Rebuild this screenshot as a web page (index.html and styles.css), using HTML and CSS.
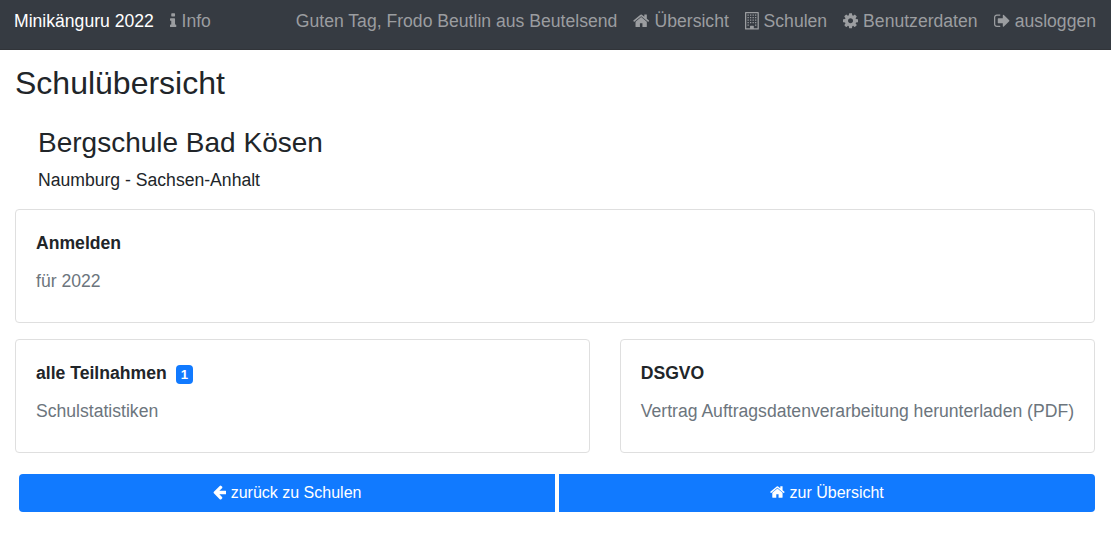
FILE: index.html
```
<!DOCTYPE html>
<html lang="de">
<head>
<meta charset="utf-8">
<title>Minikänguru 2022</title>
<link rel="stylesheet" href="styles.css">
</head>
<body>
<svg class="sprite" aria-hidden="true">
  <symbol id="home" viewBox="64 0 1664 1792"><path d="M1472 992v480q0 26-19 45t-45 19h-384v-384h-256v384h-384q-26 0-45-19t-19-45v-480q0-1 .5-3t.5-3l575-474 575 474q1 2 1 6zm223-69l-62 74q-8 9-21 11h-3q-13 0-21-7l-692-577-692 577q-12 8-24 7-13-2-21-11l-62-74q-8-10-7-23.5t11-21.5l719-599q32-26 76-26t76 26l244 204v-195q0-14 9-23t23-9h192q14 0 23 9t9 23v408l219 182q10 8 11 21.5t-7 23.5z"/></symbol>
</svg>
<nav class="navbar">
  <div class="nav-group">
    <a class="nav-link brand">Minikänguru 2022</a>
    <a class="nav-link"><svg class="icon icon-info" viewBox="576 0 640 1792"><path d="M1216 1344v128q0 26-19 45t-45 19h-512q-26 0-45-19t-19-45v-128q0-26 19-45t45-19h64v-384h-64q-26 0-45-19t-19-45v-128q0-26 19-45t45-19h384q26 0 45 19t19 45v576h64q26 0 45 19t19 45zm-128-1152v192q0 26-19 45t-45 19h-256q-26 0-45-19t-19-45v-192q0-26 19-45t45-19h256q26 0 45 19t19 45z"/></svg> Info</a>
  </div>
  <div class="nav-group">
    <span class="nav-link">Guten Tag, Frodo Beutlin aus Beutelsend</span>
    <a class="nav-link"><svg class="icon icon-wide"><use href="#home"/></svg> Übersicht</a>
    <a class="nav-link"><svg class="icon icon-building" viewBox="0 0 1408 1792"><path fill-rule="evenodd" d="M64 0H1344Q1408 0 1408 64V1728Q1408 1792 1344 1792H64Q0 1792 0 1728V64Q0 0 64 0ZM128 128V1664H512V1440Q512 1408 544 1408H864Q896 1408 896 1440V1664H1280V128Z"/><path class="windows" d="M288 256V1408M544 256V1280M800 256V1280M1056 256V1408" transform="translate(32 0)"/></svg> Schulen</a>
    <a class="nav-link"><svg class="icon icon-medium" viewBox="128 0 1536 1792"><path d="M1152 896q0-106-75-181t-181-75-181 75-75 181 75 181 181 75 181-75 75-181zm512-109v222q0 12-8 23t-20 13l-185 28q-19 54-39 91 35 50 107 138 10 12 10 25t-9 23q-27 37-99 108t-94 71q-12 0-26-9l-138-108q-44 23-91 38-16 136-29 186-7 28-36 28h-222q-14 0-24.5-8.5t-11.5-21.5l-28-184q-49-16-90-37l-141 107q-10 9-25 9-14 0-25-11-126-114-165-168-7-10-7-23 0-12 8-23 15-21 51-66.5t54-70.5q-27-50-41-99l-183-27q-13-2-21-12.5t-8-23.5v-222q0-12 8-23t19-13l186-28q14-46 39-92-40-57-107-138-10-12-10-24 0-10 9-23 26-36 98.5-107.5t94.5-71.5q13 0 26 10l138 107q44-23 91-38 16-136 29-186 7-28 36-28h222q14 0 24.5 8.5t11.5 21.5l28 184q49 16 90 37l142-107q9-9 24-9 13 0 25 10 129 119 165 170 7 8 7 22 0 12-8 23-15 21-51 66.5t-54 70.5q26 50 41 98l183 28q13 2 21 12.5t8 23.5z"/></svg> Benutzerdaten</a>
    <a class="nav-link"><svg class="icon icon-wide" viewBox="64 0 1664 1792"><path d="M704 1440q0 4 1 20t.5 26.5-3 23.5-10 19.5-20.5 6.5h-320q-119 0-203.5-84.5t-84.5-203.5v-704q0-119 84.5-203.5t203.5-84.5h320q13 0 22.5 9.5t9.5 22.5q0 4 1 20t.5 26.5-3 23.5-10 19.5-20.5 6.5h-320q-66 0-113 47t-47 113v704q0 66 47 113t113 47h312l11.5 1 11.5 3 8 5.5 7 9 2 13.5zm928-544q0 26-19 45l-544 544q-19 19-45 19t-45-19-19-45v-288h-448q-26 0-45-19t-19-45v-384q0-26 19-45t45-19h448v-288q0-26 19-45t45-19 45 19l544 544q19 19 19 45z"/></svg> ausloggen</a>
  </div>
</nav>
<main class="page">
  <h1 class="title">Schulübersicht</h1>
  <header class="school">
    <h2 class="school-name">Bergschule Bad Kösen</h2>
    <p class="school-place">Naumburg - Sachsen-Anhalt</p>
  </header>
  <section class="card">
    <h3 class="card-title">Anmelden</h3>
    <p class="card-text">für 2022</p>
  </section>
  <div class="card-row">
    <section class="card card-grow">
      <h3 class="card-title">alle Teilnahmen <span class="badge">1</span></h3>
      <p class="card-text">Schulstatistiken</p>
    </section>
    <section class="card">
      <h3 class="card-title">DSGVO</h3>
      <p class="card-text">Vertrag Auftragsdatenverarbeitung herunterladen (PDF)</p>
    </section>
  </div>
  <div class="buttons">
    <button class="btn btn-first"><svg class="icon icon-medium" viewBox="128 0 1536 1792"><path d="M1664 896v128q0 53-32.5 90.5t-84.5 37.5h-704l293 294q38 36 38 90t-38 90l-75 76q-37 37-90 37-52 0-91-37l-651-652q-37-37-37-90 0-52 37-91l651-650q38-38 91-38 52 0 90 38l75 74q38 38 38 91t-38 91l-293 293h704q52 0 84.5 37.5t32.5 90.5z"/></svg> zurück zu Schulen</button>
    <button class="btn btn-last"><svg class="icon icon-wide"><use href="#home"/></svg> zur Übersicht</button>
  </div>
</main>
</body>
</html>
```
FILE: styles.css
```
* { box-sizing: border-box; }
body {
  margin: 0;
  background: #fff;
  color: #212529;
  font: 17.6px/26.4px "Liberation Sans", Arial, sans-serif;
}
.sprite { display: none; }
.navbar {
  display: flex;
  justify-content: space-between;
  height: 50px;
  padding: 8px 7px 0 6px;
  background: #363b42;
  border-bottom: 1px solid #313439;
}
.nav-group { display: flex; }
.nav-link { padding: 0 8px; color: #9b9da0; white-space: nowrap; }
.brand { padding-right: 8.5px; color: #fff; }
.icon { height: 1em; vertical-align: -0.143em; fill: currentColor; }
.icon-info { width: 0.357em; }
.icon-wide { width: 0.929em; }
.icon-building { width: 0.786em; }
.icon-medium { width: 0.857em; }
.windows { fill: none; stroke: currentColor; stroke-width: 128; stroke-dasharray: 128; }
.page { padding: 14px 16px 0 15px; }
.title { margin: 0; font-size: 32px; line-height: 38px; font-weight: 400; }
.school { padding: 24px 23px 16px; }
.school-name { margin: 0 0 7px; font-size: 28px; line-height: 33.6px; font-weight: 400; }
.school-place { margin: 0; }
.card {
  height: 114px;
  padding: 20px;
  border: 1px solid #dfdfdf;
  border-radius: 4px;
}
.card-title { margin: 0 0 12px; font-size: 17.6px; line-height: 26px; font-weight: 700; }
.card-text { margin: 0; color: #6c757d; white-space: nowrap; }
.card-row { display: flex; gap: 30px; margin-top: 16px; }
.card-grow { flex: 1; }
.badge {
  display: inline-block;
  margin-left: 4px;
  padding: 3px 5.28px;
  border-radius: 4px;
  background: #117aff;
  color: #fff;
  font-size: 13.2px;
  line-height: 13px;
  vertical-align: baseline;
}
.buttons { display: flex; gap: 4px; margin: 21px 0 0 4px; }
.btn {
  flex: 1;
  height: 38px;
  padding: 6px 12px;
  border: 0;
  background: #117aff;
  color: #fff;
  font: 16px/24px "Liberation Sans", Arial, sans-serif;
}
.btn-first { border-radius: 4px 0 0 4px; }
.btn-last { border-radius: 0 4px 4px 0; }
```
